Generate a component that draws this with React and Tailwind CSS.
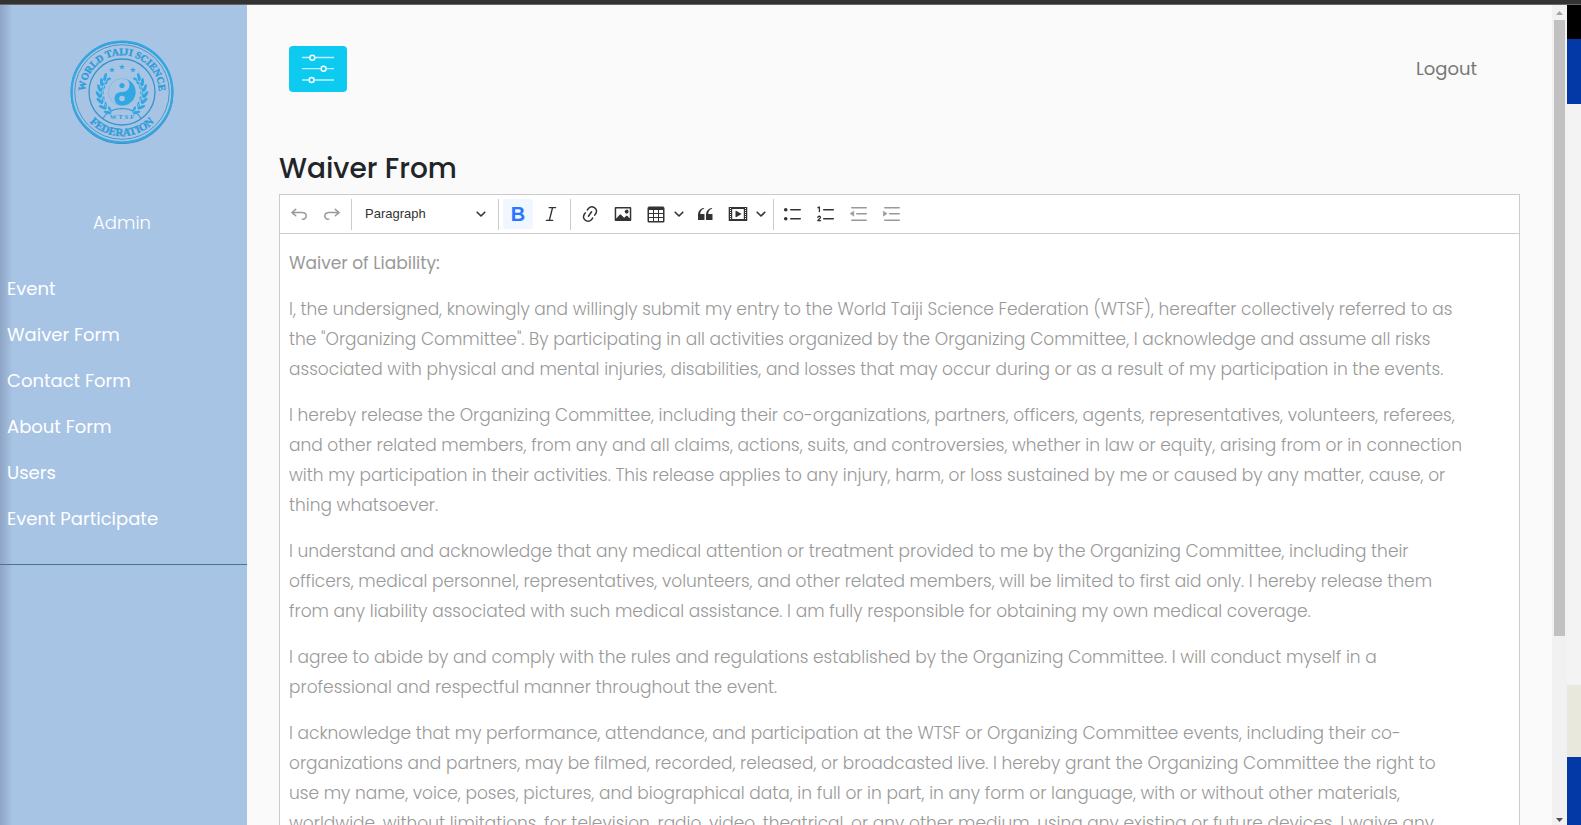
import React from "react";

const NAV = ["Event", "Waiver Form", "Contact Form", "About Form", "Users", "Event Participate"];

const PARAGRAPHS = [
  'I, the undersigned, knowingly and willingly submit my entry to the World Taiji Science Federation (WTSF), hereafter collectively referred to as the "Organizing Committee". By participating in all activities organized by the Organizing Committee, I acknowledge and assume all risks associated with physical and mental injuries, disabilities, and losses that may occur during or as a result of my participation in the events.',
  "I hereby release the Organizing Committee, including their co-organizations, partners, officers, agents, representatives, volunteers, referees, and other related members, from any and all claims, actions, suits, and controversies, whether in law or equity, arising from or in connection with my participation in their activities. This release applies to any injury, harm, or loss sustained by me or caused by any matter, cause, or thing whatsoever.",
  "I understand and acknowledge that any medical attention or treatment provided to me by the Organizing Committee, including their officers, medical personnel, representatives, volunteers, and other related members, will be limited to first aid only. I hereby release them from any liability associated with such medical assistance. I am fully responsible for obtaining my own medical coverage.",
  "I agree to abide by and comply with the rules and regulations established by the Organizing Committee. I will conduct myself in a professional and respectful manner throughout the event.",
  "I acknowledge that my performance, attendance, and participation at the WTSF or Organizing Committee events, including their co-organizations and partners, may be filmed, recorded, released, or broadcasted live. I hereby grant the Organizing Committee the right to use my name, voice, poses, pictures, and biographical data, in full or in part, in any form or language, with or without other materials, worldwide, without limitations, for television, radio, video, theatrical, or any other medium, using any existing or future devices. I waive any",
];

const ICONS = {
  undo: "m5.042 9.367 2.189 1.837a.75.75 0 0 1-.965 1.149l-3.788-3.18a.747.747 0 0 1-.21-.284.75.75 0 0 1 .17-.945L6.23 4.762a.75.75 0 1 1 .964 1.15L4.863 7.866h8.917A.75.75 0 0 1 14 7.9a4 4 0 1 1-1.477 7.718l.344-1.489a2.5 2.5 0 1 0 1.094-4.73l.008-.032H5.042z",
  redo: "m14.958 9.367-2.189 1.837a.75.75 0 0 0 .965 1.149l3.788-3.18a.747.747 0 0 0 .21-.284.75.75 0 0 0-.17-.945L13.77 4.762a.75.75 0 1 0-.964 1.15l2.331 1.955H6.22A.75.75 0 0 0 6 7.9a4 4 0 1 0 1.477 7.718l-.344-1.489A2.5 2.5 0 1 1 6.039 9.4l-.008-.032h8.927z",
  link: "m11.077 15 .991-1.416a.75.75 0 1 1 1.229.86l-1.148 1.64a.748.748 0 0 1-.217.206 5.251 5.251 0 0 1-8.503-5.955.741.741 0 0 1 .12-.274l1.147-1.639a.75.75 0 1 1 1.228.86L4.933 10.7l.006.003a3.75 3.75 0 0 0 6.132 4.294l.006.004zm5.494-5.335a.748.748 0 0 1-.12.274l-1.147 1.639a.75.75 0 1 1-1.228-.86l.86-1.23a3.75 3.75 0 0 0-6.144-4.301l-.86 1.229a.75.75 0 0 1-1.229-.86l1.148-1.64a.748.748 0 0 1 .217-.206 5.251 5.251 0 0 1 8.503 5.955zm-4.563-2.532a.75.75 0 0 1 .184 1.045l-3.155 4.505a.75.75 0 1 1-1.229-.86l3.155-4.506a.75.75 0 0 1 1.045-.184z",
  image: "M6.91 10.54c.26-.23.64-.21.88.03l3.36 3.14 2.23-2.06a.64.64 0 0 1 .87 0l2.52 2.97V4.5H3.2v10.12l3.71-4.08zm10.27-7.51c.6 0 1.09.47 1.09 1.05v11.84c0 .59-.49 1.06-1.09 1.06H2.79c-.6 0-1.09-.47-1.09-1.06V4.08c0-.58.49-1.05 1.1-1.05h14.38zm-5.22 5.56a1.96 1.96 0 1 1 3.4-1.96 1.96 1.96 0 0 1-3.4 1.96z",
  table: "M3 6v3h4V6H3zm0 4v3h4v-3H3zm0 4v3h4v-3H3zm5 3h4v-3H8v3zm5 0h4v-3h-4v3zm4-4v-3h-4v3h4zm0-4V6h-4v3h4zm1.5 8a1.5 1.5 0 0 1-1.5 1.5H3A1.5 1.5 0 0 1 1.5 17V4c.222-.863 1.068-1.5 2-1.5h13c.932 0 1.778.637 2 1.5v13zM12 13v-3H8v3h4zm0-4V6H8v3h4z",
  quote: "M3 10.423a6.5 6.5 0 0 1 6.056-6.408l.038.67C6.448 5.423 5.354 7.663 5.22 10H9c.552 0 .5.432.5.986v4.511c0 .554-.448.503-1 .503h-5c-.552 0-.5-.449-.5-1.003v-4.574zm8 0a6.5 6.5 0 0 1 6.056-6.408l.038.67c-2.646.739-3.74 2.979-3.873 5.315H17c.552 0 .5.432.5.986v4.511c0 .554-.448.503-1 .503h-5c-.552 0-.5-.449-.5-1.003v-4.574z",
  media: "M18.68 3.03c.6 0 .59-.03.59.55v12.84c0 .59.01.56-.59.56H1.29c-.6 0-.59.03-.59-.56V3.58c0-.58-.01-.55.6-.55h17.38zM15.77 15V5H4.2v10h11.57zM2 4v1h1V4H2zm0 2v1h1V6H2zm0 2v1h1V8H2zm0 2v1h1v-1H2zm0 2v1h1v-1H2zm0 2v1h1v-1H2zM17 4v1h1V4h-1zm0 2v1h1V6h-1zm0 2v1h1V8h-1zm0 2v1h1v-1h-1zm0 2v1h1v-1h-1zm0 2v1h1v-1h-1zM7.5 7.177a.4.4 0 0 1 .593-.351l5.133 2.824a.4.4 0 0 1 0 .7l-5.133 2.824a.4.4 0 0 1-.593-.35V7.176z",
  bullets: "M7 5.75c0 .414.336.75.75.75h9.5a.75.75 0 1 0 0-1.5h-9.5a.75.75 0 0 0-.75.75zm-6 0C1 4.784 1.777 4 2.75 4c.966 0 1.75.777 1.75 1.75 0 .966-.777 1.75-1.75 1.75C1.784 7.5 1 6.723 1 5.75zm6 9c0 .414.336.75.75.75h9.5a.75.75 0 1 0 0-1.5h-9.5a.75.75 0 0 0-.75.75zm-6 0c0-.966.777-1.75 1.75-1.75.966 0 1.75.777 1.75 1.75 0 .966-.777 1.75-1.75 1.75-.966 0-1.75-.777-1.75-1.75z",
};

function Icon({ name }) {
  return (
    <svg viewBox="0 0 20 20" className="h-5 w-5" fill="currentColor" fillRule="evenodd" aria-hidden="true">
      <path d={ICONS[name]} />
    </svg>
  );
}

function StrokeIcon({ children }) {
  return (
    <svg viewBox="0 0 20 20" className="h-5 w-5" fill="none" stroke="currentColor" strokeWidth="1.5" strokeLinecap="round" strokeLinejoin="round" aria-hidden="true">
      {children}
    </svg>
  );
}

function Chevron() {
  return (
    <svg viewBox="0 0 10 10" className="h-[10px] w-[10px]" fill="none" stroke="currentColor" strokeWidth="1.6" strokeLinecap="round" strokeLinejoin="round" aria-hidden="true">
      <path d="M1.2 3.2 5 7l3.8-3.8" />
    </svg>
  );
}

function Tool({ label, disabled, active, children }) {
  return (
    <button
      type="button"
      aria-label={label}
      disabled={disabled}
      className={
        "flex h-[30px] w-[30px] shrink-0 items-center justify-center rounded-[2px] " +
        (active ? "bg-[#f0f7ff] text-[#2977ff]" : disabled ? "text-[#999999]" : "text-[#333333]")
      }
    >
      {children}
    </button>
  );
}

function SplitTool({ label, children }) {
  return (
    <div className="flex shrink-0 text-[#333333]">
      <Tool label={label}>{children}</Tool>
      <button type="button" aria-label={label + " options"} className="flex h-[30px] w-4 items-center justify-center">
        <Chevron />
      </button>
    </div>
  );
}

function Separator() {
  return <span className="h-[31px] w-px shrink-0 bg-[#cccccc]" />;
}

function ToolGroup({ children }) {
  return <div className="flex shrink-0 gap-[3px]">{children}</div>;
}

const LEAVES = [
  [-14, 18.5, 50], [-18.5, 13.5, 35], [-21, 7.5, 18], [-22, 1.5, 5], [-21, -4.5, -10], [-18.5, -10, -25], [-15, -14.5, -45],
];

function Laurel() {
  return (
    <g fill="#2fa8e4">
      {LEAVES.map(([x, y, a]) => (
        <g key={a} transform={`translate(${x} ${y}) rotate(${-a})`}>
          <ellipse cx="-2" cy="0" rx="1.5" ry="4" transform="rotate(-28)" />
          <ellipse cx="2" cy="0" rx="1.4" ry="3.6" transform="rotate(28)" />
        </g>
      ))}
      <path d="M-10 21C-21 13-23-4-13-16" fill="none" stroke="#a8c4e5" strokeWidth=".8" />
    </g>
  );
}

function Star({ x, y }) {
  return (
    <path
      transform={`translate(${x} ${y})`}
      fill="#2fa8e4"
      d="M0-3 .8-.9 3-.9 1.2.5 1.9 2.6 0 1.3-1.9 2.6-1.2.5-3-.9-.8-.9z"
    />
  );
}

function Logo() {
  return (
    <svg viewBox="-53 -53 106 106" className="h-[106px] w-[106px]" role="img" aria-label="World Taiji Science Federation">
      <defs>
        <path id="arc-top" d="M-34.800 12.700A37 37 0 1 1 34.800 12.700" />
        <path id="arc-bottom" d="M-43.300-7.600A44 44 0 1 0 43.300-7.600" />
      </defs>
      <g fill="none">
        <circle cy=".7" r="50.5" stroke="#4a7ba6" strokeWidth="1.6" />
        <circle r="50.4" stroke="#2fa8e4" strokeWidth="2.2" />
        <circle r="47.3" stroke="#3a93c8" strokeWidth=".9" />
        <circle r="33" stroke="#3495cf" strokeWidth="1.3" />
      </g>
      <g fill="#2f9dd8" textAnchor="middle" className="font-['Liberation_Serif',serif] font-bold">
        <text fontSize="10" stroke="#2f9dd8" strokeWidth=".4">
          <textPath href="#arc-top" startOffset="50%">WORLD TAIJI SCIENCE</textPath>
        </text>
        <text fontSize="11" stroke="#2f9dd8" strokeWidth=".4">
          <textPath href="#arc-bottom" startOffset="50%">FEDERATION</textPath>
        </text>
        <text y="27" fontSize="7">W T S F</text>
      </g>
      <path d="M-19 26.500Q-14 17 0 16.500 14 17 19 26.500" fill="none" stroke="#3495cf" strokeWidth="1.100" />
      <Star x={-10} y={-22} />
      <Star x={0} y={-25} />
      <Star x={11} y={-22} />
      <Laurel />
      <g transform="scale(-1 1)">
        <Laurel />
      </g>
      <circle r="13.500" fill="#a8c4e5" stroke="#6fb4e2" strokeWidth=".6" />
      <path d="M4-12.900A13.500 13.500 0 0 1 0 13.500A6.750 6.750 0 0 1-7.500 6.500C-7.500 2-4 0 0 0 5 0 7.500-3.500 7.500-7 7.500-10 6-12 4-12.900z" fill="#2fa8e4" />
      <circle cy="-6.500" r="2.600" fill="#2fa8e4" />
      <circle cy="6.500" r="2.800" fill="#a8c4e5" />
    </svg>
  );
}

function Sidebar() {
  return (
    <aside className="w-[247px] shrink-0 bg-[#a8c4e5] bg-linear-to-r from-[#8ea5c5] to-[#a8c4e5] to-[13px] text-[18px] leading-[30px] text-white">
      <div className="flex flex-col items-center pt-[34px] pr-[3px]">
        <Logo />
        <p className="pt-[63px] font-light">Admin</p>
      </div>
      <nav className="border-b border-[#47748f] pt-7 pb-[22px]">
        <ul className="flex flex-col">
          {NAV.map((item) => (
            <li key={item}>
              <a href="#" className="block px-[7px] py-2">{item}</a>
            </li>
          ))}
        </ul>
      </nav>
    </aside>
  );
}

function Toolbar() {
  return (
    <div role="toolbar" aria-label="Editor toolbar" className="flex h-[39px] items-center gap-1 overflow-hidden border-b border-[#cccccc] pl-1">
      <ToolGroup>
        <Tool label="Undo" disabled><Icon name="undo" /></Tool>
        <Tool label="Redo" disabled><Icon name="redo" /></Tool>
      </ToolGroup>
      <Separator />
      <div className="relative w-[138px] shrink-0">
        <select aria-label="Heading" className="h-[30px] w-full appearance-none bg-transparent pl-[9px] font-['Liberation_Sans',sans-serif] text-[13px] text-[#333333]">
          <option>Paragraph</option>
        </select>
        <span className="pointer-events-none absolute inset-y-0 right-2 flex items-center text-[#333333]">
          <Chevron />
        </span>
      </div>
      <Separator />
      <ToolGroup>
        <Tool label="Bold" active>
          <span className="font-['Liberation_Sans',sans-serif] text-[20px] leading-5 font-bold">B</span>
        </Tool>
        <Tool label="Italic">
          <StrokeIcon>
            <path d="M8.200 3.600h6.400M5.400 16.400h6.300M11.500 3.800 8.400 16.200" strokeWidth="1.400" />
          </StrokeIcon>
        </Tool>
      </ToolGroup>
      <Separator />
      <ToolGroup>
        <Tool label="Link"><Icon name="link" /></Tool>
        <Tool label="Insert image"><Icon name="image" /></Tool>
        <SplitTool label="Insert table"><Icon name="table" /></SplitTool>
        <Tool label="Block quote"><Icon name="quote" /></Tool>
        <SplitTool label="Insert media"><Icon name="media" /></SplitTool>
      </ToolGroup>
      <Separator />
      <ToolGroup>
        <Tool label="Bulleted list"><Icon name="bullets" /></Tool>
        <Tool label="Numbered list">
          <StrokeIcon>
            <path d="M7.700 5.750h9.600M7.700 14.750h9.600" />
            <path d="M2 3.700 3.400 3v4.600M1.800 13.300c.3-1.500 2.800-1.400 2.600.2-.1 1-1.600 1.700-2.600 3.200h2.800" strokeWidth="1.300" />
          </StrokeIcon>
        </Tool>
        <Tool label="Decrease indent" disabled>
          <StrokeIcon>
            <path d="M2.750 3.750h14.500M7.750 9.750h9.500M2.750 16.250h14.500" />
            <path d="M4.800 7.400v4.700L1.300 9.750z" fill="currentColor" strokeWidth=".6" />
          </StrokeIcon>
        </Tool>
        <Tool label="Increase indent" disabled>
          <StrokeIcon>
            <path d="M2.750 3.750h14.500M7.750 9.750h9.500M2.750 16.250h14.500" />
            <path d="M1.400 7.400v4.700l3.500-2.350z" fill="currentColor" strokeWidth=".6" />
          </StrokeIcon>
        </Tool>
      </ToolGroup>
    </div>
  );
}

function Main() {
  return (
    <main className="min-w-0 flex-1 overflow-hidden bg-[#fafafa] px-8">
      <header className="flex items-center justify-between pt-[41px] pr-[43px] pl-[10px]">
        <button type="button" aria-label="Toggle menu" className="flex h-[46px] w-[58px] items-center justify-center rounded-[4px] bg-[#0dcaf0]">
          <svg viewBox="0 0 32 32" className="h-8 w-8" fill="none" stroke="#ffffff" aria-hidden="true">
            <g strokeWidth="1.300" strokeOpacity=".75">
              <path d="M0 4.500h7.700M13 4.500h19M0 15.600h18.700M24.400 15.600H32M0 27h6.800M12.400 27H32" />
            </g>
            <g strokeWidth="1.400">
              <circle cx="10.300" cy="4.700" r="2.500" />
              <circle cx="21.600" cy="15.800" r="2.500" />
              <circle cx="9.600" cy="27" r="2.500" />
            </g>
          </svg>
        </button>
        <a href="#" className="text-[18px] leading-[30px] text-[#777777]">Logout</a>
      </header>
      <h1 className="pt-[60px] pb-2 text-[28px] leading-[34px] font-medium text-[#212529]">Waiver From</h1>
      <section className="border border-[#cccccc] bg-white">
        <Toolbar />
        <div
          role="textbox"
          aria-label="Waiver text"
          contentEditable
          suppressContentEditableWarning
          className="flex flex-col gap-4 pt-[14px] pr-[51px] pb-4 pl-[9px] text-[17px] leading-[30px] font-light text-[#999999] outline-none"
        >
          <p className="font-normal">Waiver of Liability:</p>
          {PARAGRAPHS.map((text) => (
            <p key={text}>{text}</p>
          ))}
        </div>
      </section>
    </main>
  );
}

function Scrollbar() {
  return (
    <div className="flex w-[15px] shrink-0 flex-col items-center bg-[#f1f1f1]" aria-hidden="true">
      <svg viewBox="0 0 15 15" className="h-[15px] w-[15px]"><path d="M4 10h7L7.500 6z" fill="#a3a3a3" /></svg>
      <div className="flex w-full flex-1 flex-col items-center">
        <div className="h-[78%] w-[11px] bg-[#c1c1c1]" />
      </div>
      <svg viewBox="0 0 15 15" className="h-[15px] w-[15px]"><path d="M4 8h7l-3.500 4z" fill="#505050" /></svg>
    </div>
  );
}

function PageEdge() {
  return (
    <div className="flex w-[14px] shrink-0 flex-col bg-[#f3f3f3]" aria-hidden="true">
      <div className="h-[34px] bg-black" />
      <div className="h-[65px] bg-[#0339a6]" />
      <div className="flex-1" />
      <div className="h-[72px] bg-[#e8e8dc]" />
      <div className="h-[68px] bg-[#0339a6]" />
    </div>
  );
}

export default function App() {
  return (
    <div className="flex h-screen flex-col overflow-hidden font-[Poppins,Inter,sans-serif]">
      <div className="h-[5px] shrink-0 border-b border-[#666666] bg-[#333333]" />
      <div className="flex min-h-0 flex-1">
        <Sidebar />
        <Main />
        <Scrollbar />
        <PageEdge />
      </div>
    </div>
  );
}
